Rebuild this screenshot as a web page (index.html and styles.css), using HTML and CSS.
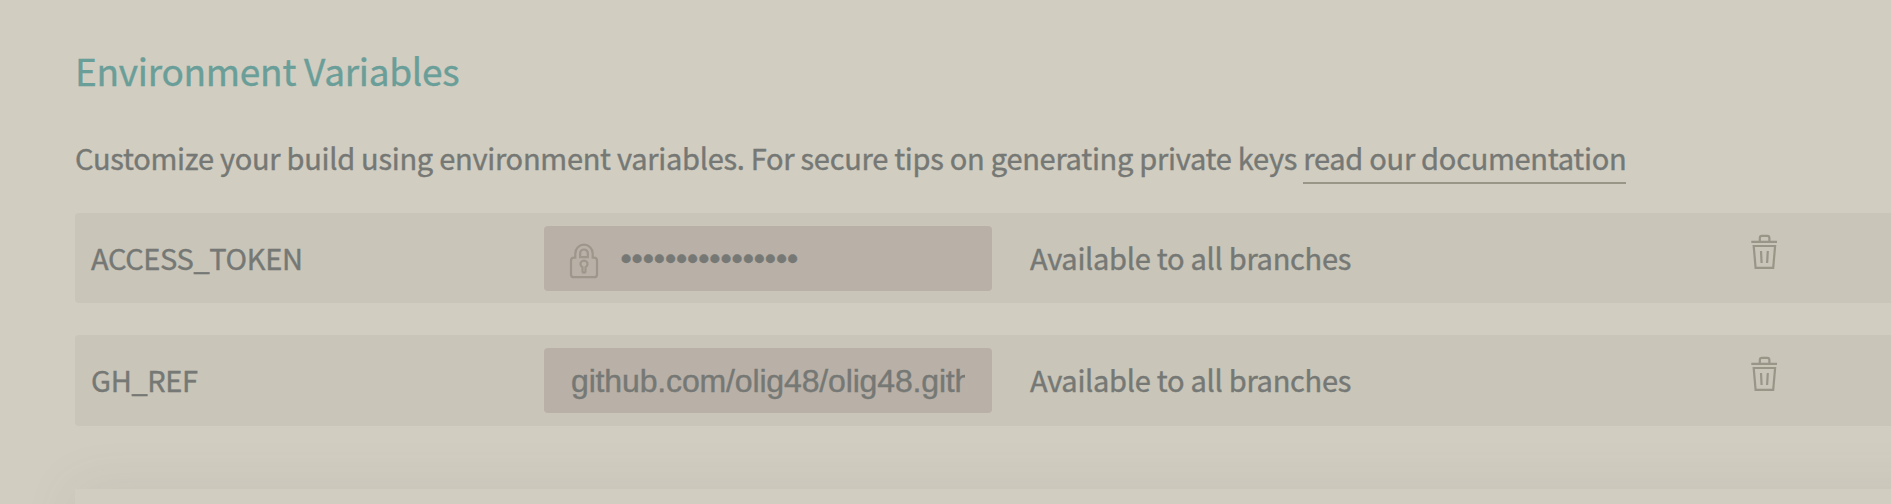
FILE: index.html
```html
<!DOCTYPE html>
<html lang="en">
<head>
<meta charset="utf-8">
<title>Environment Variables</title>
<link rel="stylesheet" href="styles.css">
</head>
<body>
<svg class="sprite" width="0" height="0">
  <symbol id="trash" viewBox="0 0 28 36">
    <path d="M1.3 7.8H27M9.8 7.8V4.2Q9.8 1.9 12 1.9H17.2Q19.4 1.9 19.4 4.2V7.8M3.7 12H25.1L23.2 33.9H5.6ZM11 17L11.6 29M17.8 17L17.1 29"/>
  </symbol>
</svg>
<main class="settings">
  <h2 class="title">Environment Variables</h2>
  <p class="intro">Customize your build using environment variables. For secure tips on generating private keys <a class="link" href="#">read our documentation</a></p>
  <ul class="vars">
    <li class="var">
      <span class="name">ACCESS_TOKEN</span>
      <span class="field secret">
        <svg class="lock" viewBox="0 0 30 36"><path d="M6.3 14.6V10.4A8.7 8.7 0 0 1 23.7 10.4V14.6H25Q28 14.6 28 17.6V31.4Q28 34.2 25 34.2H5Q2 34.2 2 31.4V17.6Q2 14.6 5 14.6ZM11.2 14.2V10.3A3.8 3.8 0 0 1 18.8 10.3V14.2ZM13.5 24.2A3.5 3.5 0 1 1 16.5 24.2V28.3Q16.5 29.7 15 29.7Q13.5 29.7 13.5 28.3Z"/></svg>
        <span class="value dots">••••••••••••••••</span>
      </span>
      <span class="branches">Available to all branches</span>
      <svg class="trash"><use href="#trash"/></svg>
    </li>
    <li class="var tall">
      <span class="name">GH_REF</span>
      <span class="field"><span class="value">github.com/olig48/olig48.gith</span></span>
      <span class="branches">Available to all branches</span>
      <svg class="trash"><use href="#trash"/></svg>
    </li>
  </ul>
  <div class="panel"></div>
</main>
</body>
</html>
```
FILE: styles.css
```css
* { box-sizing: border-box; }
html { overflow: hidden; }
body {
  margin: 0;
  height: 504px;
  overflow: hidden;
  background: #d1cdc1;
  color: #757874;
  font-family: "Noto Sans CJK SC", "Noto Sans", sans-serif;
  font-size: 29px;
  letter-spacing: -0.27px;
  -webkit-text-stroke: 0.4px currentColor;
}
.sprite { position: absolute; }
.settings { width: 1985px; height: 504px; overflow: hidden; padding: 42px 0 0 75px; }
.title {
  margin: 0;
  height: 56px;
  line-height: 56px;
  color: #6a9e99;
  font-size: 37px;
  font-weight: 400;
}
.intro {
  margin: 37px 0 0;
  height: 78px;
  line-height: 44px;
  white-space: nowrap;
}
.link {
  display: inline-block;
  height: 49px;
  color: inherit;
  text-decoration: none;
  border-bottom: 2px solid #999587;
}
.vars { margin: 0; padding: 0; list-style: none; }
.var {
  display: flex;
  align-items: flex-start;
  height: 90px;
  margin-bottom: 32px;
  padding: 13px 0 0 16px;
  background: #c9c5b9;
  border-radius: 4px;
  line-height: 63px;
}
.tall { height: 91px; margin-bottom: 62.5px; }
.name { width: 453px; letter-spacing: -0.35px; }
.field {
  display: flex;
  width: 448px;
  height: 65px;
  padding: 0 27px;
  background: #b9b0a7;
  border-radius: 4px;
}
.secret { padding-left: 24px; }
.lock { width: 30px; height: 36px; margin: 17px 22px 0 0.5px; fill: none; stroke: #9e968b; stroke-width: 2.2; }
.value {
  flex: 1;
  overflow: hidden;
  white-space: nowrap;
  font-family: "Liberation Sans", Arial, sans-serif;
  font-size: 32px;
  line-height: 66px;
  letter-spacing: -0.15px;
}
.dots { line-height: 65px; letter-spacing: -0.1px; }
.branches { width: 720px; margin-left: 38px; }
.trash { width: 28px; height: 36px; margin-top: 8px; fill: none; stroke: #999587; stroke-width: 2.2; }
.panel { height: 200px; background: #d1cdc1; box-shadow: 0 0 50px rgba(100, 95, 80, .1); }
```
